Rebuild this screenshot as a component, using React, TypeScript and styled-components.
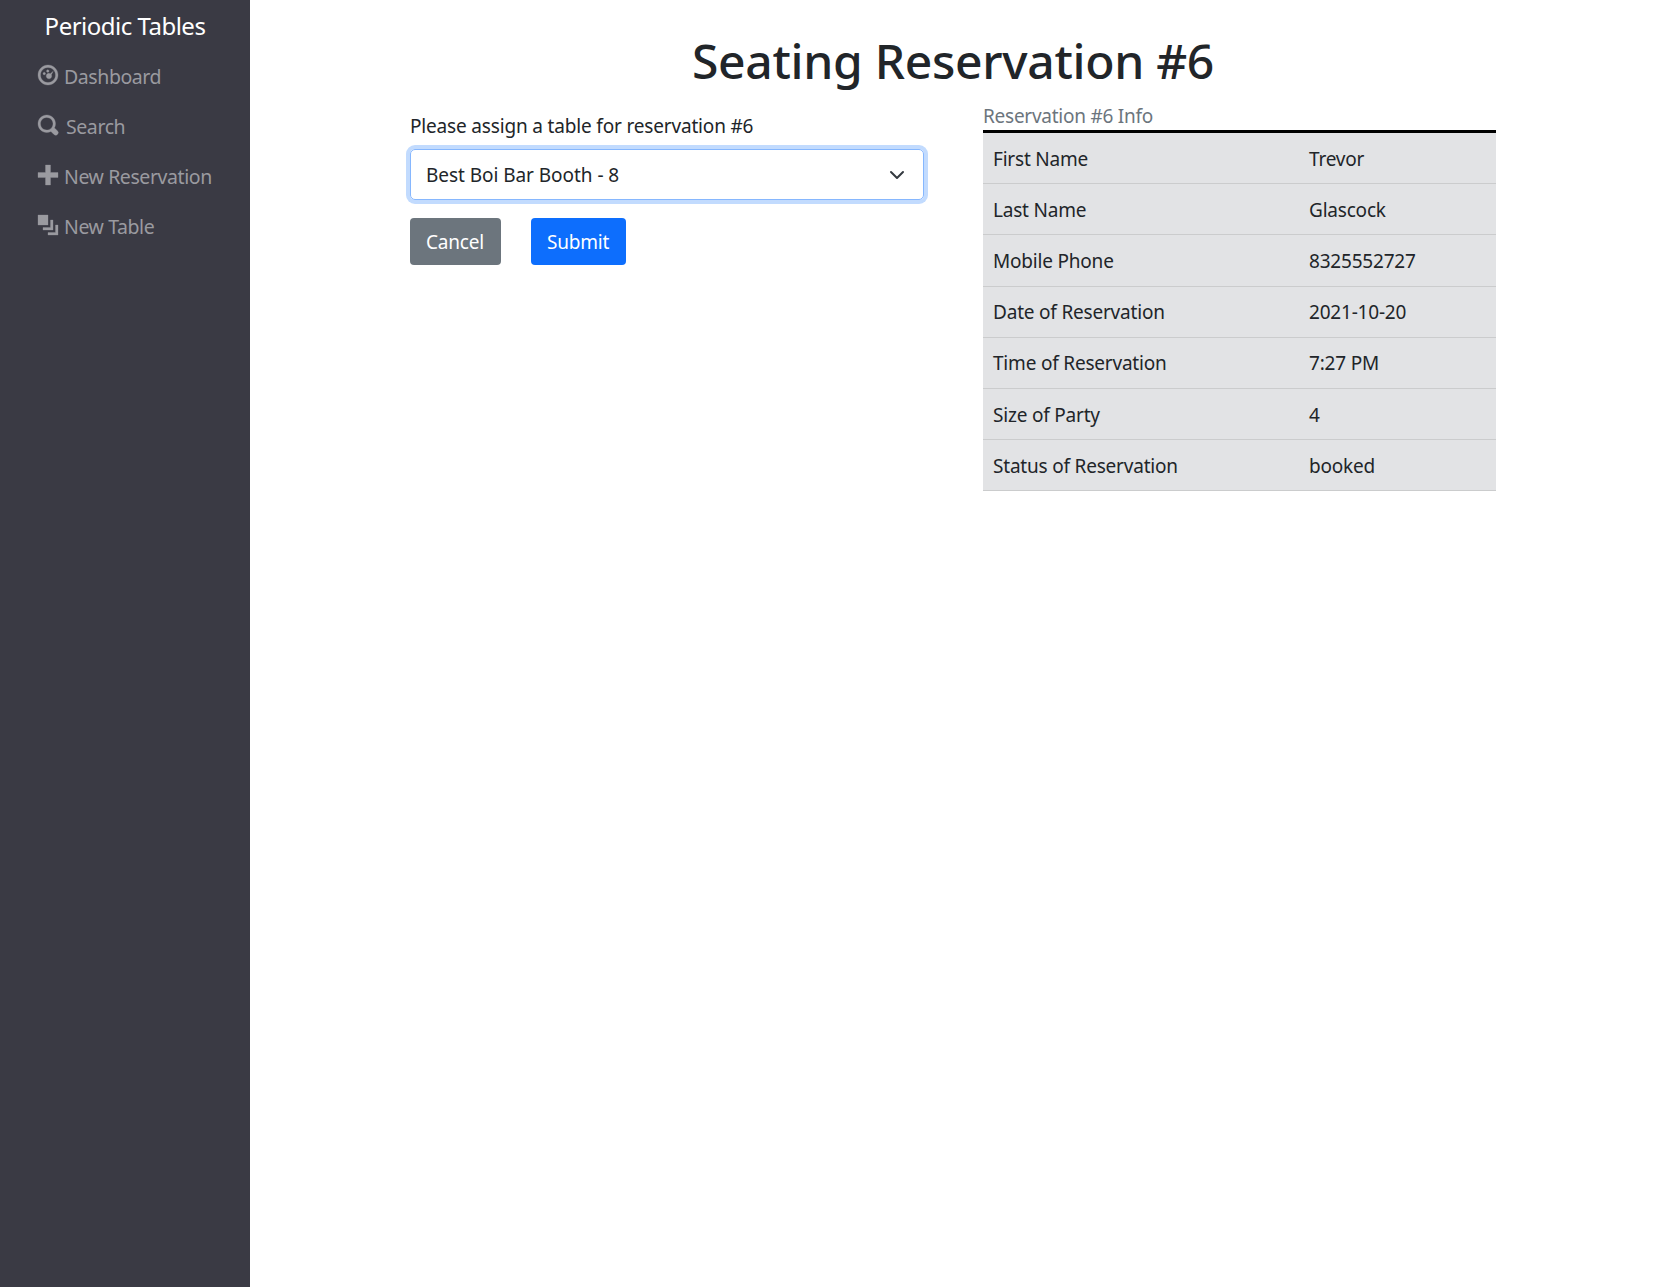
import React from "react";
import styled, { createGlobalStyle } from "styled-components";

const Global = createGlobalStyle`
  html, body { margin: 0; padding: 0; background: #fff; }
  body { font-family: "Noto Sans", "Open Sans", sans-serif; color: #212529; font-size: 19px; }
`;
const Page = styled.div`display: flex; min-height: 1287px;`;
const Sidebar = styled.nav`width: 250px; flex: none; background: #3a3a44; display: flex; flex-direction: column;`;
const Brand = styled.div`color: #fff; font-size: 24px; line-height: 34px; text-align: center; padding-top: 9px; margin-bottom: 8px; letter-spacing: -0.5px;`;
const NavItem = styled.a<{ $gap?: number }>`
  display: flex; align-items: center; height: 50px; padding-left: 38px; color: #9a9aa0; font-size: 19.5px;
  gap: ${p => p.$gap ?? 6}px; letter-spacing: -0.42px;
`;
const NavIcon = styled.svg`width: 20px; height: 20px; fill: #9a9aa0; stroke: #9a9aa0; stroke-width: 0.12; flex: none; margin-top: -3px; overflow: visible;`;
const Main = styled.main`flex: 1; padding: 0 0 0 160px; min-width: 0;`;
const Title = styled.h1`margin: 26px 0 0 -160px; text-align: center; font-size: 48px; line-height: 70px; font-weight: 500; letter-spacing: -0.3px;`;
const Columns = styled.div`display: flex; align-items: flex-start; margin-top: 7px;`;
const FormCol = styled.form`width: 514px; flex: none; padding-top: 9px;`;
const Label = styled.label`display: block; font-size: 19px; line-height: 28px; letter-spacing: -0.17px; margin-bottom: 9px;`;
const SelectBox = styled.div`
  height: 51px; box-sizing: border-box; border: 1px solid #86b7fe; border-radius: 5px; box-shadow: 0 0 0 4px #c2dbfe;
  display: flex; align-items: center; justify-content: space-between; padding: 0 18px 0 15px;
  font-size: 19px; letter-spacing: -0.05px;
`;
const Actions = styled.div`display: flex; gap: 30px; margin-top: 18px;`;
const Button = styled.button<{ $bg: string; $w: number }>`
  height: 47px; width: ${p => p.$w}px; border: 0; border-radius: 4px; background: ${p => p.$bg}; color: #fff;
  font: inherit; font-size: 19px; letter-spacing: -0.2px; padding: 0 1px 0 0;
`;
const InfoCol = styled.section`width: 513px; margin-left: 59px;`;
const Caption = styled.div`color: #6c757d; font-size: 19px; line-height: 25px; letter-spacing: -0.25px; padding-top: 1px;`;
const Table = styled.table`width: 100%; border-collapse: separate; border-spacing: 0; background: #e2e3e5; border-top: 3px solid #000; margin-top: 1px;`;
const Cell = styled.td<{ $w?: number }>`
  box-sizing: border-box; height: 51.2px; padding: 1px 10px 0; font-size: 19px; letter-spacing: -0.2px; color: #212529; border-bottom: 1px solid #cbcccd;
  ${p => p.$w ? `width: ${p.$w}px;` : ""}
`;

const rows = [
  ["First Name", "Trevor"], ["Last Name", "Glascock"], ["Mobile Phone", "8325552727"],
  ["Date of Reservation", "2021-10-20"], ["Time of Reservation", "7:27 PM"], ["Size of Party", "4"],
  ["Status of Reservation", "booked"],
];
const icons = {
  dash: "M4 0c-2.2 0-4 1.8-4 4s1.8 4 4 4 4-1.8 4-4-1.8-4-4-4zm0 1c1.66 0 3 1.34 3 3s-1.34 3-3 3-3-1.34-3-3 1.34-3 3-3zm-.1.9a.5.5 0 1 0 .01 0zm-1.4 1a.5.5 0 1 0 .01 0zm3.6-.4l-1.2.95a1.1 1.1 0 1 0 .45.45z",
  search: "M3.5 0c-1.93 0-3.5 1.57-3.5 3.5s1.57 3.5 3.5 3.5c.59 0 1.17-.14 1.66-.41a1 1 0 0 0 .13.13l1 1a1.02 1.02 0 1 0 1.44-1.44l-1-1a1 1 0 0 0-.16-.13c.27-.49.44-1.06.44-1.66 0-1.93-1.57-3.5-3.5-3.5zm0 1c1.39 0 2.5 1.11 2.5 2.5 0 .66-.24 1.27-.66 1.72-.01.01-.02.02-.03.03a1 1 0 0 0-.13.13c-.44.4-1.04.63-1.69.63-1.39 0-2.5-1.11-2.5-2.5s1.11-2.5 2.5-2.5z",
  plus: "M3 0v3h-3v2h3v3h2v-3h3v-2h-3v-3h-2z",
  layers: "M0 0v4h4v-4h-4zm5 2v3h-3v1h4v-4h-1zm2 2v3h-3v1h4v-4h-1z",
};
const nav: [string, string, number?][] = [
  ["Dashboard", icons.dash], ["Search", icons.search, 8], ["New Reservation", icons.plus], ["New Table", icons.layers],
];

export default function App() {
  return (
    <Page>
      <Global />
      <Sidebar>
        <Brand>Periodic Tables</Brand>
        {nav.map(([label, d, gap]) => (
          <NavItem key={label} $gap={gap}>
            <NavIcon viewBox="0 0 8 8"><path d={d} /></NavIcon>
            {label}
          </NavItem>
        ))}
      </Sidebar>
      <Main>
        <Title>Seating Reservation #6</Title>
        <Columns>
          <FormCol>
            <Label>Please assign a table for reservation #6</Label>
            <SelectBox>
              Best Boi Bar Booth - 8
              <svg width="16" height="16" viewBox="0 0 16 16" fill="none" stroke="#343a40" strokeWidth="2" strokeLinecap="round" strokeLinejoin="round"><path d="M2 5l6 6 6-6" /></svg>
            </SelectBox>
            <Actions>
              <Button type="button" $bg="#6c757d" $w={91}>Cancel</Button>
              <Button type="button" $bg="#0d6efd" $w={95}>Submit</Button>
            </Actions>
          </FormCol>
          <InfoCol>
            <Caption>Reservation #6 Info</Caption>
            <Table>
              <tbody>
                {rows.map(([k, v]) => (
                  <tr key={k}><Cell $w={316}>{k}</Cell><Cell>{v}</Cell></tr>
                ))}
              </tbody>
            </Table>
          </InfoCol>
        </Columns>
      </Main>
    </Page>
  );
}
